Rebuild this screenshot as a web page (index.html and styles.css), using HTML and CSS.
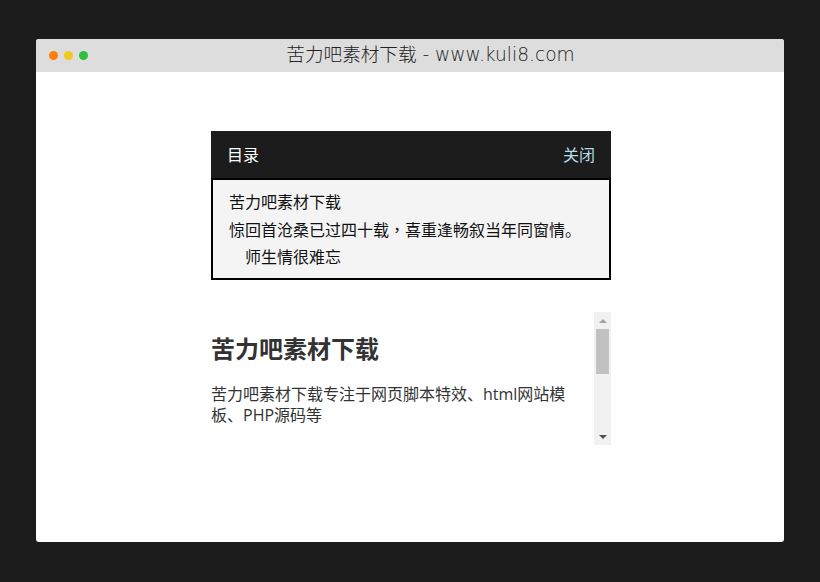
FILE: index.html
```html
<!DOCTYPE html>
<html lang="zh-CN">

<head>
    <meta charset="UTF-8">
    <title>苦力吧素材下载</title>
    <link rel="stylesheet" href="styles.css">
</head>

<body>
    <div class="window">
        <!--标题栏-->
        <div class="titlebar">
            <div class="dots">
                <span class="dot orange"></span>
                <span class="dot yellow"></span>
                <span class="dot green"></span>
            </div>
            <div class="title">苦力吧素材下载 - www.kuli8.com</div>
        </div>
        <div class="content">
            <!--目录-->
            <div class="toc">
                <div class="toc-head">
                    <span>目录</span>
                    <a class="close">关闭</a>
                </div>
                <ul class="toc-list">
                    <li>苦力吧素材下载</li>
                    <li>惊回首沧桑已过四十载<span class="comma" lang="zh-TW">，</span>喜重逢畅叙当年同窗情。</li>
                    <li class="sub">师生情很难忘</li>
                </ul>
            </div>
            <!--正文-->
            <div class="article">
                <div class="text">
                    <h1>苦力吧素材下载</h1>
                    <p>苦力吧素材下载专注于网页脚本特效、html网站模板、PHP源码等</p>
                </div>
                <div class="scrollbar">
                    <div class="arrow up"></div>
                    <div class="track">
                        <div class="thumb"></div>
                    </div>
                    <div class="arrow down"></div>
                </div>
            </div>
        </div>
    </div>
</body>

</html>
```

FILE: styles.css
```css
html,
body {
    margin: 0;
    height: 100%;
}

body {
    background: #1c1c1c;
    padding: 39px 36px 40px;
    box-sizing: border-box;
    font-family: "Open Sans", "Noto Sans CJK SC", sans-serif;
    font-size: 16px;
}

.window {
    height: 503px;
    background: #fff;
    border-radius: 3px;
    overflow: hidden;
}

.titlebar {
    height: 33px;
    background: #dddddd;
    display: flex;
    align-items: center;
    position: relative;
}

.dots {
    display: flex;
    gap: 6px;
    padding-left: 13px;
    position: absolute;
}

.dot {
    width: 9px;
    height: 9px;
    border-radius: 50%;
}

.orange {
    background: #ff7f0e;
}

.yellow {
    background: #f2c81c;
}

.green {
    background: #2fbf3a;
}

.title {
    flex: 1;
    text-align: center;
    padding-left: 41px;
    font-family: "DejaVu Sans", "Noto Sans CJK SC", sans-serif;
    font-weight: 200;
    font-size: 18.6px;
    line-height: 31px;
    height: 33px;
    color: #222;
}

.content {
    width: 400px;
    margin: 59px 0 0 175px;
}

.toc-head {
    height: 47px;
    background: #1c1c1c;
    color: #fff;
    display: flex;
    align-items: center;
    justify-content: space-between;
    padding: 0 16px 2px;
    box-sizing: border-box;
}

.close {
    color: #b4dde8;
}

.toc-list {
    list-style: none;
    margin: 0;
    padding: 9px 16px 8px;
    height: 102px;
    box-sizing: border-box;
    border: 2px solid #000;
    background: #f4f4f4;
    color: #111;
}

.toc-list li {
    line-height: 27px;
}

.toc-list .sub {
    padding-left: 16px;
}

/*逗号居中*/
.comma {
    font-family: "Noto Sans CJK TC", sans-serif;
}

.article {
    display: flex;
    height: 133px;
    margin-top: 32px;
}

.text {
    flex: 1;
    color: #333;
    padding-right: 24px;
}

h1 {
    margin: 20px 0 0;
    font-size: 24px;
    line-height: 34px;
    font-weight: 700;
}

p {
    margin: 18px 0 0;
    line-height: 21px;
}

.scrollbar {
    width: 17px;
    background: #f1f1f1;
    display: flex;
    flex-direction: column;
}

.arrow {
    height: 17px;
    display: flex;
    align-items: center;
    justify-content: center;
}

.arrow::before {
    content: '';
    border-left: 4px solid transparent;
    border-right: 4px solid transparent;
}

.up::before {
    border-bottom: 4px solid #a3a3a3;
}

.down::before {
    border-top: 4px solid #505050;
}

.track {
    flex: 1;
    padding: 0 2px;
}

.thumb {
    height: 45px;
    background: #c1c1c1;
}
```
